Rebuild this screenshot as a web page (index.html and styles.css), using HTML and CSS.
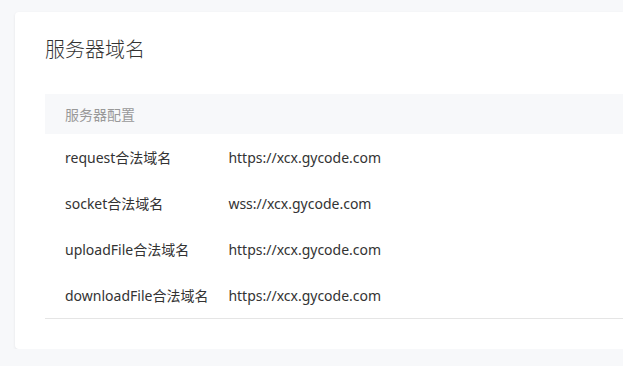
FILE: index.html
```html
<!DOCTYPE html>
<html lang="zh-CN">
<head>
<meta charset="utf-8">
<link rel="stylesheet" href="styles.css">
</head>
<body>
<div class="page">
  <section class="card">
    <h2 class="title">服务器域名</h2>
    <table class="domains">
      <thead>
        <tr><th colspan="2">服务器配置</th></tr>
      </thead>
      <tbody>
        <tr><td class="key">request合法域名</td><td>https://xcx.gycode.com</td></tr>
        <tr><td class="key">socket合法域名</td><td>wss://xcx.gycode.com</td></tr>
        <tr><td class="key">uploadFile合法域名</td><td>https://xcx.gycode.com</td></tr>
        <tr><td class="key">downloadFile合法域名</td><td>https://xcx.gycode.com</td></tr>
      </tbody>
    </table>
  </section>
</div>
</body>
</html>
```
FILE: styles.css
```css
html, body {
  margin: 0;
  padding: 0;
  background: #f7f8fa;
  font-family: "Noto Sans", "Noto Sans CJK SC", sans-serif;
  color: #333;
}
.page {
  padding: 12px 0 0 15px;
  overflow: hidden;
}
.card {
  background: #fff;
  border-radius: 4px 0 0 4px;
  box-shadow: 0 1px 3px rgba(0, 0, 0, 0.08);
  padding: 24px 0 30px 30px;
}
.title {
  margin: 0 0 30px 0;
  font-size: 20px;
  line-height: 28px;
  font-weight: 300;
  color: #333;
}
.domains {
  width: 100%;
  border-collapse: collapse;
  font-size: 14px;
  border-bottom: 1px solid #e5e5e5;
}
.domains th {
  background: #f7f8fa;
  height: 40px;
  padding: 0 20px;
  text-align: left;
  font-weight: 400;
  color: #999;
}
.domains td {
  height: 46px;
  padding: 0 0 0 20px;
  color: #333;
  white-space: nowrap;
}
.domains td.key {
  width: 1px;
}
```
